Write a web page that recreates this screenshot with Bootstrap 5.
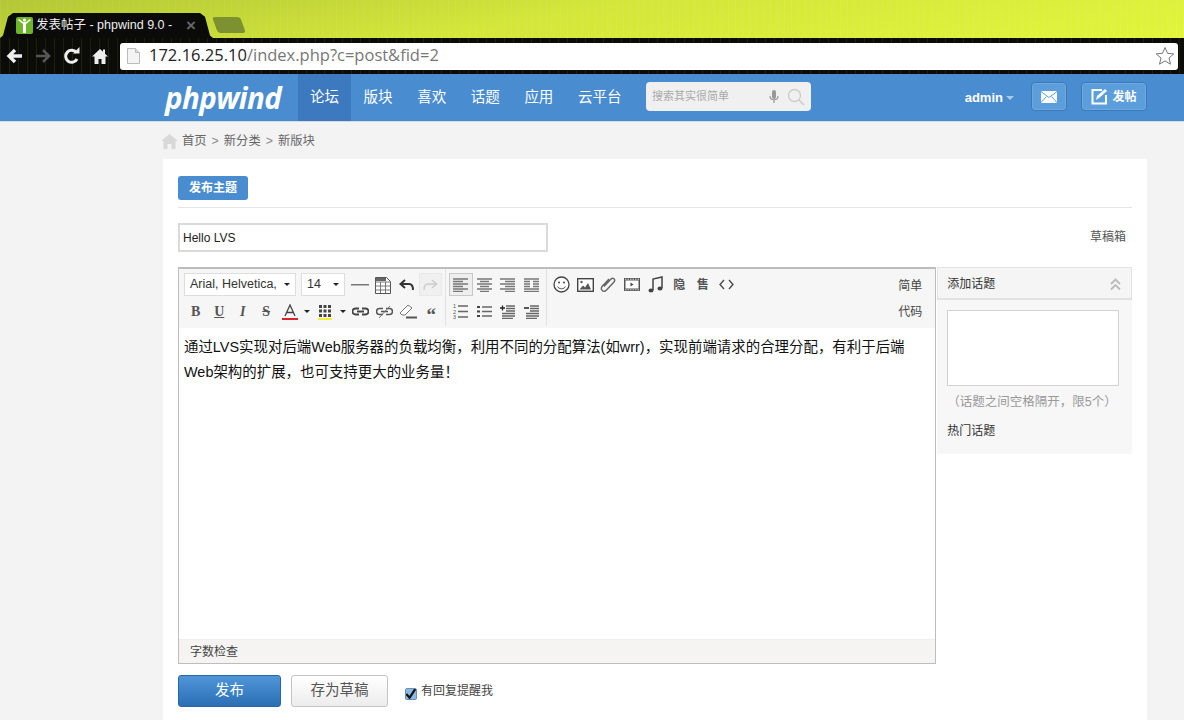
<!DOCTYPE html>
<html lang="en">

<head>
    <meta charset="UTF-8">
    <meta name="viewport" content="width=device-width, initial-scale=1.0">
    <title>发表帖子 - phpwind 9.0</title>
    <link href="https://cdn.jsdelivr.net/npm/bootstrap@5.3.0/dist/css/bootstrap.min.css" rel="stylesheet">
    <style>
        html, body { height: 720px; overflow: hidden; }
        body {
            font-family: "Liberation Sans", "Noto Sans CJK SC", sans-serif;
            background: #f3f3f3;
            font-size: 12px;
            color: #333;
        }

        /* browser frame */
        .tab-strip {
            height: 38px;
            background:
                repeating-linear-gradient(90deg, rgba(255,255,255,.05) 0 1px, transparent 1px 7px),
                linear-gradient(170deg, #b3c736 0, #d3e63a 45%, #e2f53c 100%);
        }
        .tab-inner {
            background: #0a0a08;
            width: 213px;
            height: 25px;
            color: #eee;
            font-size: 12.5px;
            padding-left: 16px;
            white-space: nowrap;
            clip-path: polygon(0 100%, 3px 90%, 8px 15%, 13px 0, 200px 0, 205px 15%, 210px 90%, 213px 100%);
        }
        .tab-title { width: 147px; overflow: hidden; margin-left: 3px; }
        .tab-close { color: #666; font-size: 17px; line-height: 1; font-weight: bold; margin-left: 3px; }
        .new-tab {
            width: 28px; height: 16px; background: #7e9130; margin-left: 2px; margin-bottom: 5px;
            border-radius: 3px; transform: skewX(20deg);
        }
        .tool-strip {
            height: 36px;
            background:
                repeating-linear-gradient(90deg, rgba(120,130,60,.16) 0 1px, transparent 1px 9px),
                #0b0b07;
            padding-left: 5px;
        }
        .bar-gap { margin-left: 10px; }
        .url-bar {
            margin-left: 11px;
            width: 1058px;
            height: 27px;
            background: #fff;
            border-radius: 3px;
            font-family: "Open Sans", "DejaVu Sans", sans-serif;
            font-size: 16.5px;
            color: #777;
            padding: 0 3px 1px 7px;
        }
        .url-bar b { font-weight: 400; color: #222; }
        .url-bar span { margin-left: 9px; }

        /* site nav */
        .site-nav { height: 47px; background: #498ccf; border-bottom: 1px solid #d8d8d8; box-sizing: content-box; }
        .pw-wrap { margin-left: 163px; width: 984px; }
        .pw-logo {
            width: 135px;
            padding-left: 2px;
            color: #fff;
            font-family: "Open Sans", "Liberation Sans", sans-serif;
            font-style: italic;
            font-weight: 700;
            font-size: 29.5px;
            letter-spacing: -.6px;
            line-height: 47px;
            white-space: nowrap;
        }
        .pw-link { color: #fff; font-size: 14.5px; height: 47px; line-height: 47px; padding: 0 12px; margin-right: .6px; text-decoration: none; display: block; }
        .pw-link.is-on { background: #3d79bf; }
        .pw-search {
            margin-left: 12px;
            margin-bottom: 2px;
            width: 165px;
            height: 29px;
            background: #f0f0f0;
            border-radius: 4px;
            color: #aaa;
            font-size: 11px;
            padding: 0 6px;
        }
        .pw-user { color: #fff; font-weight: 700; font-size: 13px; margin-right: 17px; }
        .pw-caret { display: inline-block; border: 4px solid transparent; border-top-color: #a9cbea; border-bottom: 0; margin-left: 3px; vertical-align: 2px; }
        .pw-iconbtn {
            height: 29px;
            margin-bottom: 2px;
            background: #5c9ddb;
            border: 1px solid #3b78b8;
            border-radius: 4px;
            color: #fff;
            font-size: 12px;
            font-weight: 700;
            box-shadow: inset 0 0 0 1px rgba(255,255,255,.12);
        }
        .btn-mail { width: 36px; }
        .btn-post { width: 66px; margin-left: 14px; }

        /* content */
        .crumbs { height: 37px; padding-top: 2px; color: #666; font-size: 12.3px; margin-left: -2px; }
        .crumbs i { font-style: normal; color: #888; margin: 0 5px; font-family: "Liberation Sans", sans-serif; }
        .pw-panel { background: #fff; height: 561px; padding: 17px 15px 0; }
        .pw-heading { border-bottom: 1px solid #e4e4e4; height: 32px; }
        .pw-tab {
            background: #498ccf;
            color: #fff;
            font-weight: 700;
            font-size: 12px;
            height: 24px;
            line-height: 24px;
            width: 70px;
            text-align: center;
            border-radius: 3px;
        }
        .title-row { margin-top: 15px; }
        .pw-title {
            width: 370px;
            height: 29px;
            border: 2px solid #dadada;
            border-radius: 0;
            padding: 0 3px;
            font-size: 12px;
            color: #222;
            box-shadow: none;
        }
        .draft-link { color: #555; margin-right: 6px; margin-top: -2px; }
        .edit-row { margin-top: 15px; }
        .edit-box { width: 759px; height: 397px; border: 1px solid #bdbdbd; border-top-width: 2px; }
        .edit-tools { height: 59px; background: #f6f6f6; color: #444; flex: none; }
        .tool-row { height: 27px; margin-top: 2px; }
        .tool-row + .tool-row { margin-top: 0; }
        .tool-pad { padding-left: 5px; }
        .tool-sel {
            height: 23px;
            background: #fff;
            border: 1px solid #ddd;
            font-size: 12.5px;
            color: #333;
            padding: 0 5px;
            white-space: nowrap;
            overflow: hidden;
        }
        .sel-font { width: 112px; margin-right: 5px; }
        .sel-size { width: 44px; margin-right: 3px; padding-left: 5px; }
        .tool-caret { display: inline-block; border: 3px solid transparent; border-top-color: #222; border-bottom: 0; flex: none; }
        .tool-ico { width: 23.5px; height: 23px; display: flex; align-items: center; justify-content: center; flex: none; }
        .tool-ico.is-off { background: #f0f0f0; border: 1px solid #e8e8e8; }
        .tool-ico.is-on { background: #eee; border: 1px solid #c9c9c9; }
        .tool-glyph { font-family: "Liberation Serif", serif; font-weight: 700; font-size: 14px; color: #555; }
        .tool-quote { font-size: 19px; padding-top: 7px; }
        .tool-cn { font-size: 12px; font-weight: 700; color: #555; }
        .tool-arrow { width: 11px; height: 23px; display: flex; align-items: center; justify-content: center; flex: none; margin-right: 1px; }
        .tool-sep { width: 1px; height: 57px; background: #e2e2e2; margin: 0 3px; flex: none; }
        .tool-sep.sep-first { margin-left: 2px; }
        .mode-btn { margin-left: auto; margin-right: 13px; color: #444; }
        .mode-btn span:first-child { margin-top: 8px; }
        .mode-btn span:last-child { margin-top: 8px; }
        .edit-body { flex: 1; font-size: 14.45px; line-height: 25.5px; padding: 6.5px 5px 0; color: #111; }
        .edit-foot { height: 24px; background: #f5f4f3; border-top: 1px solid #eee; padding-left: 11px; line-height: 24px; color: #444; }
        .topic-box { width: 195px; height: 187px; margin-left: 1px; background: #f7f7f7; }
        .topic-head { height: 33px; border: 1px solid #e2e2e2; border-bottom-width: 2px; background: #f5f5f5; padding: 2px 10px 0 9px; color: #333; }
        .topic-input { width: 172px; height: 76px; margin: 10px 0 0 10px; background: #fff; border: 1px solid #d2d2d2; border-radius: 0; }
        .topic-hint { color: #999; font-size: 12.500px; margin: 9px 0 0 10px; line-height: 14px; }
        .topic-hot { margin: 15px 0 0 10px; line-height: 14px; color: #333; }
        .submit-row { margin-top: 11px; }
        .btn-send {
            width: 103px; height: 32px; padding: 0;
            background: linear-gradient(#4f96d8, #2a6fb4);
            border: 1px solid #2a66a5;
            border-radius: 3px;
            color: #fff;
            font-size: 14.5px;
        }
        .btn-draft {
            width: 97px; height: 32px; padding: 0; margin-left: 10px;
            background: linear-gradient(#fff, #ececec);
            border: 1px solid #c4c4c4;
            border-radius: 3px;
            color: #555;
            font-size: 14.5px;
        }
        .remind-row { margin-left: 17px; color: #444; }
        .remind-row .form-check-input {
            width: 12px; height: 12px; margin: 5px 4px 0 0; border-radius: 2px;
            border-color: #6e8fb0;
            background-color: #8bb9e6;
            background-size: 15px;
            background-image: url("data:image/svg+xml,%3Csvg xmlns='http://www.w3.org/2000/svg' viewBox='0 0 16 16'%3E%3Cpath d='M3 8l3.5 4L13 2' fill='none' stroke='%23111' stroke-width='2.4'/%3E%3C/svg%3E");
        }
    </style>
</head>

<body>
    <!-- browser frame -->
    <div class="tab-strip d-flex align-items-end">
        <div class="tab-inner d-flex align-items-center">
            <svg width="17" height="17" viewBox="0 0 17 17"><rect width="17" height="17" rx="2" fill="#6fb52c"/><path d="M2 3l5 4v9h3v-9l5-4-1-1-4 3H7L3 2z" fill="#fff"/><circle cx="8.5" cy="3" r="1.6" fill="#fff"/></svg>
            <span class="tab-title">发表帖子 - phpwind 9.0 -</span>
            <span class="tab-close">×</span>
        </div>
        <div class="new-tab"></div>
    </div>
    <div class="tool-strip d-flex align-items-center">
        <svg width="20" height="20" viewBox="0 0 20 20"><path d="M17 10H5M10 4l-6 6 6 6" fill="none" stroke="#eee" stroke-width="3.4"/></svg>
        <svg class="ms-2" width="20" height="20" viewBox="0 0 20 20"><path d="M3 10h12M10 4l6 6-6 6" fill="none" stroke="#555" stroke-width="2.6"/></svg>
        <svg class="bar-gap" width="18" height="18" viewBox="0 0 18 18"><path d="M14 12a6 6 0 1 1-.6-6.4" fill="none" stroke="#eee" stroke-width="3"/><path d="M10 6.500h6.500V0z" fill="#eee"/></svg>
        <svg class="bar-gap" width="18" height="18" viewBox="0 0 18 18"><path d="M9 2L1 9.500h2.500V17h4v-5h3v5h4V9.500H17l-3-2.800V2.500h-2v2.300z" fill="#eee"/></svg>
        <div class="url-bar d-flex align-items-center">
            <svg width="13" height="16" viewBox="0 0 13 16"><path d="M.5.500h8l4 4v11H.5z" fill="#f3f3f3" stroke="#bbb"/><path d="M8.500.500v4h4" fill="#ddd" stroke="#bbb"/></svg>
            <span><b>172.16.25.10</b>/index.php?c=post&amp;fid=2</span>
            <svg class="ms-auto" width="20" height="20" viewBox="0 0 20 20"><path d="M10 1.500l2.500 5.800 6.300.6-4.800 4.100 1.500 6.200-5.500-3.300-5.500 3.300L6 12 1.200 7.900l6.300-.6z" fill="#fff" stroke="#777"/></svg>
        </div>
    </div>

    <!-- site nav -->
    <nav class="site-nav">
        <div class="pw-wrap d-flex align-items-center">
            <div class="pw-logo">phpwind</div>
            <a class="pw-link is-on" href="#">论坛</a>
            <a class="pw-link" href="#">版块</a>
            <a class="pw-link" href="#">喜欢</a>
            <a class="pw-link" href="#">话题</a>
            <a class="pw-link" href="#">应用</a>
            <a class="pw-link" href="#">云平台</a>
            <div class="pw-search d-flex align-items-center">
                <span>搜索其实很简单</span>
                <svg class="ms-auto" width="10" height="14" viewBox="0 0 10 14"><rect x="3" y="0" width="4" height="9" rx="2" fill="#999"/><path d="M1 6c0 5 8 5 8 0M5 10v3" fill="none" stroke="#999" stroke-width="1.200"/></svg>
                <svg class="ms-2" width="18" height="18" viewBox="0 0 18 18"><circle cx="7.500" cy="7.500" r="6" fill="none" stroke="#ccc" stroke-width="1.300"/><path d="M12 12l5 5" stroke="#ccc" stroke-width="1.600"/></svg>
            </div>
            <div class="d-flex align-items-center ms-auto">
                <span class="pw-user">admin<span class="pw-caret"></span></span>
                <div class="pw-iconbtn btn-mail d-flex align-items-center justify-content-center">
                    <svg width="16" height="12" viewBox="0 0 16 12"><rect width="16" height="12" rx="1" fill="#fff"/><path d="M0 .500l8 6 8-6M0 11.500l5.500-6M16 11.500l-5.500-6" fill="none" stroke="#5c9ddb"/></svg>
                </div>
                <div class="pw-iconbtn btn-post d-flex align-items-center justify-content-center">
                    <svg width="17" height="17" viewBox="0 0 17 17"><path d="M11 2H1.500v13.500H15V7" fill="none" stroke="#fff" stroke-width="2"/><path d="M5 12l1-4 8-7 2 2-8 7z" fill="#fff"/></svg>
                    <span class="ms-1">发帖</span>
                </div>
            </div>
        </div>
    </nav>

    <div class="pw-wrap">
        <div class="crumbs d-flex align-items-center">
            <svg class="me-1" width="17" height="15" viewBox="0 0 17 15"><path d="M8.500 0L0 7h2.500v8h4v-5h4v5h4V7H17z" fill="#d8d8d8"/></svg>
            首页<i>&gt;</i>新分类<i>&gt;</i>新版块
        </div>
        <div class="pw-panel">
            <div class="pw-heading"><div class="pw-tab">发布主题</div></div>
            <div class="title-row d-flex align-items-center justify-content-between">
                <input class="form-control pw-title" type="text" value="Hello LVS">
                <span class="draft-link">草稿箱</span>
            </div>
            <div class="edit-row d-flex align-items-start">
                <div class="edit-box d-flex flex-column">
                    <div class="edit-tools d-flex">
                        <div>
                            <div class="tool-row tool-pad d-flex align-items-center">
                                <div class="tool-sel sel-font d-flex align-items-center justify-content-between">Arial, Helvetica,<span class="tool-caret"></span></div>
                                <div class="tool-sel sel-size d-flex align-items-center justify-content-between">14<span class="tool-caret"></span></div>
                                <span class="tool-ico"><svg width="18" height="3"><rect y="1" width="18" height="1.500" fill="#777"/></svg></span>
                                <span class="tool-ico"><svg width="16" height="18" viewBox="0 0 16 18"><path d="M.5 1.500h11l4 4v12H.5z" fill="#fff" stroke="#555"/><path d="M.5 6h15M.5 10h15M.5 14h15M5.500 6v11M10.500 6v11" stroke="#777" fill="none"/><rect x="1" y="2" width="10" height="3" fill="#666"/></svg></span>
                                <span class="tool-ico"><svg width="15" height="12" viewBox="0 0 15 12"><path d="M6 1L1.500 5 6 9M2 5h8c3 0 4 2 4 6" fill="none" stroke="#333" stroke-width="2"/></svg></span>
                                <span class="tool-ico is-off"><svg width="15" height="12" viewBox="0 0 15 12"><path d="M9 1l4.500 4L9 9M13 5H5c-3 0-4 2-4 6" fill="none" stroke="#ccc" stroke-width="1.500"/></svg></span>
                            </div>
                            <div class="tool-row tool-pad d-flex align-items-center">
                                <span class="tool-ico tool-glyph">B</span>
                                <span class="tool-ico tool-glyph text-decoration-underline">U</span>
                                <span class="tool-ico tool-glyph fst-italic">I</span>
                                <span class="tool-ico tool-glyph text-decoration-line-through">S</span>
                                <span class="tool-ico"><svg width="16" height="16" viewBox="0 0 16 16"><path d="M3 12L8 1l5 11M5 8.500h6" fill="none" stroke="#444" stroke-width="1.300"/><rect y="14" width="16" height="2" fill="#d2262a"/></svg></span>
                                <span class="tool-arrow"><span class="tool-caret"></span></span>
                                <span class="tool-ico"><svg width="14" height="16" viewBox="0 0 14 16"><path d="M1 1h3v3H1zM5.500 1h3v3h-3zM10 1h3v3h-3zM1 5.500h3v3H1zM5.500 5.500h3v3h-3zM10 5.500h3v3h-3zM1 10h3v3H1zM5.500 10h3v3h-3zM10 10h3v3h-3z" fill="#444"/><rect y="14" width="14" height="2" fill="#f2ee3a"/></svg></span>
                                <span class="tool-arrow"><span class="tool-caret"></span></span>
                                <span class="tool-ico"><svg width="17" height="10" viewBox="0 0 17 10"><path d="M7 1.500H3.500a3 3 0 0 0 0 6H7M10 1.500h3.500a3 3 0 0 1 0 6H10M5 4.500h7" fill="none" stroke="#444" stroke-width="1.800"/></svg></span>
                                <span class="tool-ico"><svg width="17" height="14" viewBox="0 0 17 14"><path d="M7 3.500H3.500a3 3 0 0 0 0 6H7M10 3.500h3.500a3 3 0 0 1 0 6H10M5 6.500h7" fill="none" stroke="#555" stroke-width="1.600"/><path d="M3 13L14 1" stroke="#777"/></svg></span>
                                <span class="tool-ico"><svg width="18" height="15" viewBox="0 0 18 15"><path d="M1 9L9 1l4 3-7 7H3z" fill="#fff" stroke="#777"/><rect x="7" y="12.500" width="11" height="2" fill="#555"/></svg></span>
                                <span class="tool-ico tool-glyph tool-quote">“</span>
                            </div>
                        </div>
                        <div class="tool-sep sep-first"></div>
                        <div>
                            <div class="tool-row d-flex align-items-center">
                                <span class="tool-ico is-on"><svg width="15" height="14"><path d="M0 1h15M0 3.500h10M0 6h15M0 8.500h10M0 11h15M0 13.500h10" stroke="#777" stroke-width="1.500"/></svg></span>
                                <span class="tool-ico"><svg width="15" height="14"><path d="M0 1h15M3 3.500h9M0 6h15M3 8.500h9M0 11h15M3 13.500h9" stroke="#777" stroke-width="1.500"/></svg></span>
                                <span class="tool-ico"><svg width="15" height="14"><path d="M0 1h15M5 3.500h10M0 6h15M5 8.500h10M0 11h15M5 13.500h10" stroke="#777" stroke-width="1.500"/></svg></span>
                                <span class="tool-ico"><svg width="15" height="14"><path d="M0 1h15M0 3.500h6M9 3.500h6M0 6h6M9 6h6M0 8.500h6M9 8.500h6M0 11h15M0 13.500h15" stroke="#777" stroke-width="1.500"/></svg></span>
                            </div>
                            <div class="tool-row d-flex align-items-center">
                                <span class="tool-ico"><svg width="15" height="17"><text x="0" y="5" font-size="5.500" fill="#555">1</text><text x="0" y="10.500" font-size="5.500" fill="#555">2</text><text x="0" y="16" font-size="5.500" fill="#555">3</text><path d="M5 3h10M5 8.500h10M5 14h10" stroke="#666" stroke-width="1.300"/></svg></span>
                                <span class="tool-ico"><svg width="15" height="13"><path d="M0 2h3M0 6.500h3M0 11h3" stroke="#444" stroke-width="2"/><path d="M5 2h10M5 6.500h10M5 11h10" stroke="#666" stroke-width="1.300"/></svg></span>
                                <span class="tool-ico"><svg width="15" height="14"><path d="M0 3h5M2.500 .500v5" stroke="#222" stroke-width="1.300"/><path d="M6 1h9M6 3.500h9M6 6h9M2 8.500h13M2 11h13M2 13.500h11" stroke="#666" stroke-width="1.500"/></svg></span>
                                <span class="tool-ico"><svg width="15" height="14"><path d="M0 3h5" stroke="#222" stroke-width="1.500"/><path d="M6 1h9M6 3.500h9M6 6h9M2 8.500h13M2 11h13M2 13.500h11" stroke="#666" stroke-width="1.500"/></svg></span>
                            </div>
                        </div>
                        <div class="tool-sep"></div>
                        <div class="tool-row d-flex align-items-center">
                            <span class="tool-ico"><svg width="17" height="17" viewBox="0 0 17 17"><circle cx="8.500" cy="8.500" r="7.500" fill="#fff" stroke="#444" stroke-width="1.300"/><circle cx="6" cy="6.500" r="1" fill="#444"/><circle cx="11" cy="6.500" r="1" fill="#444"/><path d="M4.500 10.500c1.500 3 6.500 3 8 0" fill="none" stroke="#444"/></svg></span>
                            <span class="tool-ico"><svg width="17" height="14" viewBox="0 0 17 14"><rect x=".7" y=".7" width="15.600" height="12.600" fill="#fff" stroke="#444" stroke-width="1.400"/><path d="M2.500 11.500l3.500-4 2 2 3-4.500 3 6.500z" fill="#555"/><circle cx="4.500" cy="4" r="1.200" fill="#555"/></svg></span>
                            <span class="tool-ico"><svg width="17" height="17" viewBox="0 0 17 17"><path d="M4 10l7-7.500c2-2 5 .5 3 3l-7.500 8c-3 3-7-.5-4-4l6.500-7" fill="none" stroke="#666" stroke-width="1.400" transform="translate(0 .5)"/></svg></span>
                            <span class="tool-ico"><svg width="16" height="13" viewBox="0 0 16 13"><rect width="16" height="13" fill="#555"/><rect x="1.500" y="2.500" width="13" height="8" fill="#fff"/><path d="M6.500 4.500l3 2-3 2z" fill="#444"/><path d="M1 1.200h14M1 11.800h14" stroke="#ddd" stroke-dasharray="1.500 1"/></svg></span>
                            <span class="tool-ico"><svg width="15" height="18" viewBox="0 0 15 18"><path d="M5 14V3l9-2v11" fill="none" stroke="#444" stroke-width="1.500"/><ellipse cx="3" cy="14.500" rx="2.500" ry="2" fill="#444"/><ellipse cx="12" cy="12.500" rx="2.500" ry="2" fill="#444"/></svg></span>
                            <span class="tool-ico tool-cn">隐</span>
                            <span class="tool-ico tool-cn">售</span>
                            <span class="tool-ico"><svg width="15" height="11" viewBox="0 0 15 11"><path d="M5 1L1 5.500 5 10M10 1l4 4.500L10 10" fill="none" stroke="#444" stroke-width="1.300"/></svg></span>
                        </div>
                        <div class="mode-btn d-flex flex-column">
                            <span>简单</span>
                            <span>代码</span>
                        </div>
                    </div>
                    <div class="edit-body">通过LVS实现对后端Web服务器的负载均衡，利用不同的分配算法(如wrr)，实现前端请求的合理分配，有利于后端Web架构的扩展，也可支持更大的业务量！</div>
                    <div class="edit-foot">字数检查</div>
                </div>
                <div class="topic-box">
                    <div class="topic-head d-flex align-items-center justify-content-between">
                        添加话题
                        <svg width="11" height="13" viewBox="0 0 11 13"><path d="M1 6l4.500-4.500L10 6M1 11.500L5.500 7l4.500 4.500" fill="none" stroke="#bbb" stroke-width="1.800"/></svg>
                    </div>
                    <div class="topic-input"></div>
                    <div class="topic-hint">（话题之间空格隔开，限5个）</div>
                    <div class="topic-hot">热门话题</div>
                </div>
            </div>
            <div class="submit-row d-flex align-items-center">
                <button class="btn btn-send" type="button">发布</button>
                <button class="btn btn-draft" type="button">存为草稿</button>
                <div class="remind-row d-flex align-items-center">
                    <input class="form-check-input" type="checkbox" checked>
                    <span>有回复提醒我</span>
                </div>
            </div>
        </div>
    </div>

    <script src="https://cdn.jsdelivr.net/npm/bootstrap@5.3.0/dist/js/bootstrap.bundle.min.js"></script>
</body>

</html>
